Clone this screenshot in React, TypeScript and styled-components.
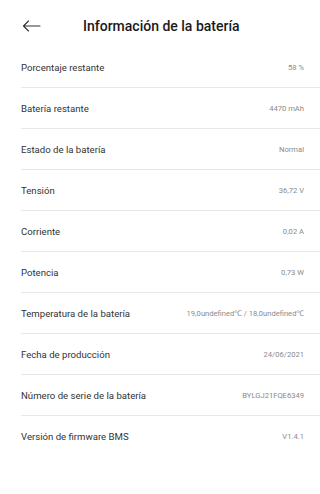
import React from "react";
import styled, { createGlobalStyle } from "styled-components";

const Global = createGlobalStyle`
  html, body { margin: 0; padding: 0; background: #fff; }
  body { font-family: Roboto, "Noto Sans", sans-serif; -webkit-font-smoothing: antialiased; }
`;

const Page = styled.div`
  width: 320px;
  min-height: 494px;
  background: #fff;
  display: flex;
  flex-direction: column;
`;

const Header = styled.header`
  height: 47px;
  display: flex;
  align-items: center;
  padding: 5px 0 0 21px;
  box-sizing: border-box;
`;

const BackButton = styled.button`
  border: 0;
  background: none;
  padding: 0;
  width: 20px;
  height: 20px;
  display: flex;
  align-items: center;
  justify-content: center;
  cursor: pointer;
`;

const Title = styled.h1`
  margin: 0 0 0 42px;
  font-size: 14px;
  font-weight: 500;
  color: #1a1a1a;
`;

const List = styled.ul`
  list-style: none;
  margin: 0;
  padding: 0 0 0 21px;
`;

const Row = styled.li<{ $last?: boolean }>`
  height: 41px;
  box-sizing: border-box;
  display: flex;
  align-items: center;
  justify-content: space-between;
  padding-right: 16px;
  border-bottom: 1px solid ${(p) => (p.$last ? "transparent" : "#e8e8e8")};
`;

const Label = styled.span`
  font-size: 9.6px;
  color: #333;
`;

const Value = styled.span`
  font-size: 7.6px;
  color: #8a8a8a;
`;

const rows: [string, string][] = [
  ["Porcentaje restante", "58 %"],
  ["Batería restante", "4470 mAh"],
  ["Estado de la batería", "Normal"],
  ["Tensión", "36,72 V"],
  ["Corriente", "0,02 A"],
  ["Potencia", "0,73 W"],
  ["Temperatura de la batería", "19,0undefined℃ / 18,0undefined℃"],
  ["Fecha de producción", "24/06/2021"],
  ["Número de serie de la batería", "BYLGJ21FQE6349"],
  ["Versión de firmware BMS", "V1.4.1"],
];

export default function App() {
  return (
    <Page>
      <Global />
      <Header>
        <BackButton aria-label="Atrás">
          <svg width="19" height="12" viewBox="0 0 19 12" fill="none">
            <path d="M18 6H1.5M6.5 1L1.5 6l5 5" stroke="#333" strokeWidth="1.1" strokeLinecap="round" strokeLinejoin="round" />
          </svg>
        </BackButton>
        <Title>Información de la batería</Title>
      </Header>
      <List>
        {rows.map(([l, v], i) => (
          <Row key={l} $last={i === rows.length - 1}>
            <Label>{l}</Label>
            <Value>{v}</Value>
          </Row>
        ))}
      </List>
    </Page>
  );
}
